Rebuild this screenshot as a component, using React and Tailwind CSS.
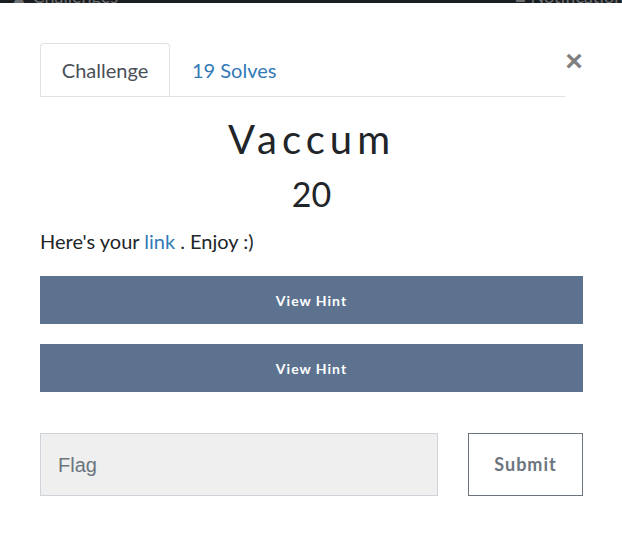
import React from 'react';

export default function App() {
    return (
        <div className="relative w-[622px] h-[557px] bg-white overflow-hidden" style={{ fontFamily: 'Lato, "Liberation Sans", sans-serif' }}>
            {/* navbar behind the modal, mostly cut off */}
            <div className="h-[3px] bg-[#1b1e21] overflow-hidden">
                <div className="flex items-end justify-between h-[3px] px-[10px] text-[18px] leading-none text-[#6d7073]">
                    <span className="-mb-[2px]">▲ Challenges</span>
                    <span className="-mb-[2px] mr-[-20px]">■ Notifications</span>
                </div>
            </div>

            <div className="pl-[40px] pr-[39px] pt-[37px]">
                <div className="flex items-start">
                    <ul className="flex flex-1 border-b border-[#dee2e6] mt-[3px]">
                        <li className="w-[130px] h-[53px] -mb-px flex items-center justify-center border border-[#dee2e6] border-b-white rounded-t-[4px] text-[20px] text-[#495057]">
                            Challenge
                        </li>
                        <li className="h-[53px] flex items-center pl-[22px] text-[20px] text-[#337ab7]">
                            19 Solves
                        </li>
                    </ul>
                    <button className="w-[18px] mt-[6px] text-[30px] leading-none font-bold text-[#7f7f7f]" style={{ fontFamily: '"Liberation Sans", Arial, sans-serif' }}>
                        ×
                    </button>
                </div>

                <h1 className="mt-[18px] text-center text-[40px] leading-[48px] tracking-[5px] text-[#212529]">Vaccum</h1>
                <h2 className="mt-[11px] text-center text-[34px] leading-[40px] text-[#212529]">20</h2>

                <p className="mt-[12px] text-[20px] leading-[30px] text-[#212529]">
                    Here's your <a className="text-[#337ab7]">link</a> . Enjoy :)
                </p>

                <div className="mt-[20px] flex flex-col gap-[20px]">
                    <button className="h-[48px] w-full bg-[#5c728f] text-white text-[14px] font-bold tracking-[1px]">View Hint</button>
                    <button className="h-[48px] w-full bg-[#5c728f] text-white text-[14px] font-bold tracking-[1px]">View Hint</button>
                </div>

                <div className="mt-[41px] flex gap-[30px]">
                    <div className="w-[398px] h-[63px] bg-[#efefef] border border-[#ced4da] flex items-center pl-[17px] text-[20px] text-[#6c757d]" style={{ fontFamily: '"Liberation Sans", Arial, sans-serif' }}>
                        Flag
                    </div>
                    <button className="w-[115px] h-[63px] border border-[#6c757d] bg-white text-[18px] font-bold tracking-[1px] text-[#6c757d]">
                        Submit
                    </button>
                </div>
            </div>
        </div>
    );
}
